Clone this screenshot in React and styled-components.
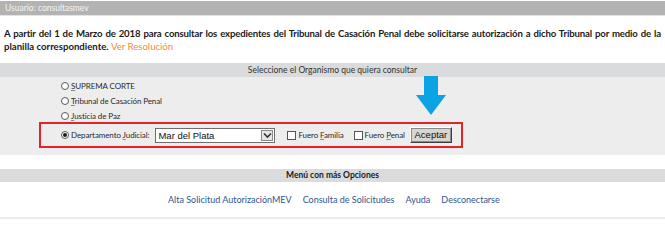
import styled, { createGlobalStyle } from "styled-components";

const GlobalStyle = createGlobalStyle`
  body {
    margin: 0;
    background: #ffffff;
    font-family: Lato, "Liberation Sans", sans-serif;
    color: #1c1c1c;
  }
`;

const options = [
  { key: "S", rest: "UPREMA CORTE" },
  { key: "T", rest: "ribunal de Casación Penal" },
  { key: "J", rest: "usticia de Paz" },
];

const links = [
  "Alta Solicitud AutorizaciónMEV",
  "Consulta de Solicitudes",
  "Ayuda",
  "Desconectarse",
];

export default function App() {
  return (
    <>
      <GlobalStyle />
      <Page>
        <UserBar>Usuario: consultasmev</UserBar>

        <Notice>
          <FirstLine>
            A partir del 1 de Marzo de 2018 para consultar los expedientes del
            Tribunal de Casación Penal debe solicitarse autorización a dicho
            Tribunal por medio de la
          </FirstLine>
          planilla correspondiente. <Resolution href="#">Ver Resolución</Resolution>
        </Notice>

        <SectionBar>Seleccione el Organismo que quiera consultar</SectionBar>
        <Panel>
          <Arrow viewBox="0 0 30 39">
            <polygon points="8,0 22,0 22,19 30,19 15,39 0,19 8,19" fill="#0ba3e4" />
          </Arrow>
          {options.map((opt) => (
            <OptionRow key={opt.rest}>
              <Radio />
              <Label>
                <u>{opt.key}</u>
                {opt.rest}
              </Label>
            </OptionRow>
          ))}
          <Highlight>
            <Radio $checked />
            <Label>
              Departamento <u>J</u>udicial:
            </Label>
            <Select>
              <SelectValue>Mar del Plata</SelectValue>
              <SelectButton>
                <svg width="9" height="7" viewBox="0 0 9 7">
                  <polyline points="1,1.5 4.5,5 8,1.5" fill="none" stroke="#333" strokeWidth="1.6" />
                </svg>
              </SelectButton>
            </Select>
            <Check $gap={12} />
            <Label>
              Fuero <u>F</u>amilia
            </Label>
            <Check $gap={10} />
            <Label>
              Fuero <u>P</u>enal
            </Label>
            <Button>Aceptar</Button>
          </Highlight>
        </Panel>

        <MenuBar>Menú con más Opciones</MenuBar>
        <LinkRow>
          {links.map((l) => (
            <MenuLink key={l} href="#">
              {l}
            </MenuLink>
          ))}
        </LinkRow>
      </Page>
    </>
  );
}

const Page = styled.div`
  width: 665px;
  padding-top: 1px;
`;

const UserBar = styled.div`
  height: 14px;
  line-height: 14px;
  padding-left: 5px;
  background: #b3b3b3;
  border-bottom: 1px solid #e4e4e4;
  color: #f4f4f4;
  font-size: 8.5px;
`;

const Notice = styled.p`
  margin: 11px 4px 0 4px;
  font-size: 9.6px;
  font-weight: bold;
  line-height: 13px;
  color: #1a1a1a;
`;

const FirstLine = styled.span`
  display: block;
  text-align: justify;
  text-align-last: justify;
  letter-spacing: -0.15px;
`;

const Resolution = styled.a`
  color: #f08a3c;
  font-weight: normal;
  text-decoration: none;
`;

const SectionBar = styled.div`
  margin-top: 10px;
  height: 14px;
  line-height: 14px;
  background: #dadbdc;
  text-align: center;
  font-size: 8.5px;
  color: #333;
`;

const Panel = styled.div`
  position: relative;
  background: #ededed;
  padding: 1px 0 7px 39px;
`;

const Arrow = styled.svg`
  position: absolute;
  top: -1px;
  left: 416px;
  width: 30px;
  height: 39px;
`;

const OptionRow = styled.div`
  display: flex;
  align-items: center;
  height: 15px;
  padding-left: 22px;
`;

const Label = styled.span`
  font-size: 8px;
  letter-spacing: -0.1px;
  color: #2a2a2a;
  white-space: nowrap;

  u {
    text-decoration-color: #888;
  }
`;

const Radio = styled.span`
  box-sizing: border-box;
  width: 8px;
  height: 8px;
  margin-right: 2px;
  border-radius: 50%;
  border: 1px solid #5a5a5a;
  background: #fff;
  display: flex;
  align-items: center;
  justify-content: center;

  &::after {
    content: "";
    width: 4px;
    height: 4px;
    border-radius: 50%;
    background: ${(p) => (p.$checked ? "#1a1a1a" : "transparent")};
  }
`;

const Highlight = styled.div`
  box-sizing: border-box;
  display: flex;
  align-items: center;
  width: 424px;
  height: 26px;
  margin-top: -1px;
  padding-left: 20px;
  border: 2px solid #e4222a;
`;

const Select = styled.div`
  box-sizing: border-box;
  display: flex;
  width: 120px;
  height: 15px;
  margin-left: 6px;
  border: 1px solid #6f6f6f;
  background: #fff;
`;

const SelectValue = styled.span`
  flex: 1;
  padding-left: 2px;
  font-family: "Liberation Sans", Arial, sans-serif;
  font-size: 9.5px;
  line-height: 13px;
  color: #111;
`;

const SelectButton = styled.span`
  box-sizing: border-box;
  width: 12px;
  margin: 1px;
  display: flex;
  align-items: center;
  justify-content: center;
  background: #e6e6e6;
  border: 1px solid #8a8a8a;
`;

const Check = styled.span`
  box-sizing: border-box;
  width: 9px;
  height: 9px;
  margin-left: ${(p) => p.$gap}px;
  margin-right: 2px;
  border: 1px solid #555;
  background: #fff;
`;

const Button = styled.span`
  box-sizing: border-box;
  margin-left: 5px;
  width: 42px;
  height: 16px;
  line-height: 13px;
  text-align: center;
  font-family: "Liberation Sans", Arial, sans-serif;
  font-size: 9.5px;
  color: #111;
  background: #d9d5cf;
  border: 1px solid;
  border-color: #fff #404040 #404040 #fff;
  box-shadow: 1px 1px 0 #8a8a8a inset, -1px -1px 0 #8a8a8a inset;
`;

const MenuBar = styled.div`
  margin-top: 14px;
  height: 13px;
  line-height: 13px;
  background: #dadbdc;
  text-align: center;
  font-size: 8.5px;
  font-weight: bold;
  color: #1a1a1a;
`;

const LinkRow = styled.div`
  display: flex;
  gap: 11px;
  padding: 12px 0 0 168px;
  height: 23px;
  border-bottom: 2px solid #ececec;
`;

const MenuLink = styled.a`
  font-size: 9px;
  line-height: 12px;
  color: #2f5592;
  text-decoration: none;
  white-space: nowrap;
`;
